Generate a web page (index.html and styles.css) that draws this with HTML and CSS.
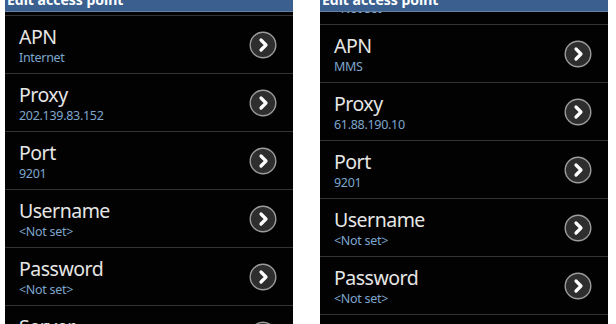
FILE: index.html
```html
<!DOCTYPE html>
<html lang="en">
<head>
  <meta charset="UTF-8" />
  <title>Edit access point</title>
  <link rel="stylesheet" href="styles.css">
</head>
<body>
  <div class="screen">
    <div class="header"><div class="header-title">Edit access point</div></div>
    <div class="viewport">
      <div class="list list-top">
        <div class="row">
          <div class="text"><div class="title">APN</div><div class="summary">Internet</div></div>
          <svg class="more" viewBox="0 0 28 28"><circle cx="14" cy="14" r="12.8"/><path d="M12 9l5 5-5 5"/></svg>
        </div>
        <div class="row">
          <div class="text"><div class="title">Proxy</div><div class="summary">202.139.83.152</div></div>
          <svg class="more" viewBox="0 0 28 28"><circle cx="14" cy="14" r="12.8"/><path d="M12 9l5 5-5 5"/></svg>
        </div>
        <div class="row">
          <div class="text"><div class="title">Port</div><div class="summary">9201</div></div>
          <svg class="more" viewBox="0 0 28 28"><circle cx="14" cy="14" r="12.8"/><path d="M12 9l5 5-5 5"/></svg>
        </div>
        <div class="row">
          <div class="text"><div class="title">Username</div><div class="summary">&lt;Not set&gt;</div></div>
          <svg class="more" viewBox="0 0 28 28"><circle cx="14" cy="14" r="12.8"/><path d="M12 9l5 5-5 5"/></svg>
        </div>
        <div class="row">
          <div class="text"><div class="title">Password</div><div class="summary">&lt;Not set&gt;</div></div>
          <svg class="more" viewBox="0 0 28 28"><circle cx="14" cy="14" r="12.8"/><path d="M12 9l5 5-5 5"/></svg>
        </div>
        <div class="row">
          <div class="text"><div class="title">Server</div><div class="summary">&lt;Not set&gt;</div></div>
          <svg class="more" viewBox="0 0 28 28"><circle cx="14" cy="14" r="12.8"/><path d="M12 9l5 5-5 5"/></svg>
        </div>
      </div>
    </div>
  </div>

  <div class="screen">
    <div class="header"><div class="header-title">Edit access point</div></div>
    <div class="viewport">
      <div class="list list-scrolled">
        <div class="row">
          <div class="text"><div class="title">Name</div><div class="summary">&lt;Not set&gt;</div></div>
        </div>
        <div class="row">
          <div class="text"><div class="title">APN</div><div class="summary">MMS</div></div>
          <svg class="more" viewBox="0 0 28 28"><circle cx="14" cy="14" r="12.8"/><path d="M12 9l5 5-5 5"/></svg>
        </div>
        <div class="row">
          <div class="text"><div class="title">Proxy</div><div class="summary">61.88.190.10</div></div>
          <svg class="more" viewBox="0 0 28 28"><circle cx="14" cy="14" r="12.8"/><path d="M12 9l5 5-5 5"/></svg>
        </div>
        <div class="row">
          <div class="text"><div class="title">Port</div><div class="summary">9201</div></div>
          <svg class="more" viewBox="0 0 28 28"><circle cx="14" cy="14" r="12.8"/><path d="M12 9l5 5-5 5"/></svg>
        </div>
        <div class="row">
          <div class="text"><div class="title">Username</div><div class="summary">&lt;Not set&gt;</div></div>
          <svg class="more" viewBox="0 0 28 28"><circle cx="14" cy="14" r="12.8"/><path d="M12 9l5 5-5 5"/></svg>
        </div>
        <div class="row">
          <div class="text"><div class="title">Password</div><div class="summary">&lt;Not set&gt;</div></div>
          <svg class="more" viewBox="0 0 28 28"><circle cx="14" cy="14" r="12.8"/><path d="M12 9l5 5-5 5"/></svg>
        </div>
        <div class="row"></div>
      </div>
    </div>
  </div>
</body>
</html>
```

FILE: styles.css
```css
*, *::before, *::after {
  box-sizing: border-box;
}

html, body {
  margin: 0;
  padding: 0;
  overflow: hidden;
}

body {
  background: #ffffff;
  width: 616px;
  height: 324px;
  display: flex;
  gap: 27px;
  padding-left: 5px;
  font-family: "Noto Sans", "DejaVu Sans", sans-serif;
}

.screen {
  width: 288px;
  height: 324px;
  background: #020202;
  overflow: hidden;
  display: flex;
  flex-direction: column;
}

.header {
  flex: none;
  height: 12px;
  overflow: hidden;
  background: #3b5f8f;
  border-bottom: 1px solid #6581a6;
}

.header-title {
  margin-top: -10px;
  padding-left: 2px;
  color: #ffffff;
  font-weight: bold;
  font-size: 14px;
  line-height: 20px;
}

.viewport {
  flex: 1;
  overflow: hidden;
}

.list-top {
  margin-top: 3px;
}

.list-scrolled {
  margin-top: -46px;
}

.row {
  height: 58px;
  border-top: 1px solid #333333;
  display: flex;
  align-items: center;
  justify-content: space-between;
  padding: 0 16px 0 14px;
}

.title {
  color: #e6e6e6;
  font-size: 19.5px;
  line-height: 26px;
  letter-spacing: -0.5px;
}

.summary {
  color: #7ea6cc;
  font-size: 12.5px;
  line-height: 16px;
  letter-spacing: -0.3px;
}

.more {
  width: 28px;
  height: 28px;
  flex: none;
}

.more circle {
  fill: #2e2e2e;
  stroke: #9c9c9c;
  stroke-width: 1.4;
}

.more path {
  fill: none;
  stroke: #ffffff;
  stroke-width: 3.2;
  stroke-linecap: round;
  stroke-linejoin: round;
}
```
